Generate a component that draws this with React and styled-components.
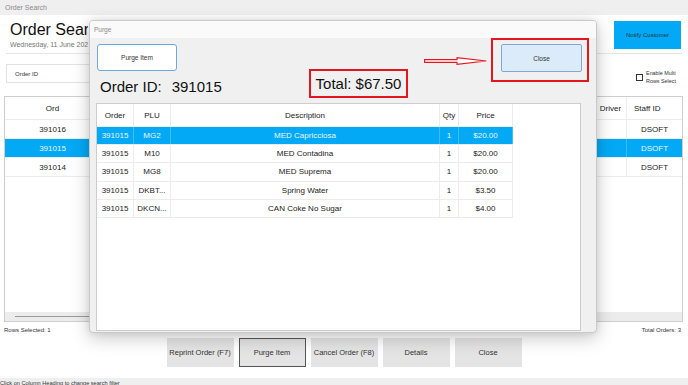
import React from "react";
import styled, { createGlobalStyle } from "styled-components";

const GlobalStyle = createGlobalStyle`
  html, body {
    margin: 0;
    padding: 0;
    background: #ffffff;
    overflow: hidden;
  }
  * {
    box-sizing: border-box;
  }
  body {
    font-family: "Liberation Sans", Arial, sans-serif;
    color: #222;
  }
`;

const BLUE = "#03a9f4";
const RED = "#e3161e";

const Page = styled.div`
  position: relative;
  width: 688px;
  height: 385px;
  display: flex;
  flex-direction: column;
  background: #fff;
`;

const WindowBar = styled.div`
  height: 15px;
  line-height: 15px;
  padding-left: 5px;
  font-size: 7px;
  color: #8a8a8a;
  background: #efefef;
`;

const Header = styled.div`
  display: flex;
  justify-content: space-between;
  align-items: flex-start;
  height: 38px;
  padding: 0 7px 0 10px;
`;

// the dialog hides the rest of the title, so clip it where the dialog starts
const TitleBlock = styled.div`
  display: flex;
  flex-direction: column;
  margin-top: 6px;
  width: 78px;
  overflow: hidden;
  white-space: nowrap;
`;

const Title = styled.div`
  font-size: 16px;
  line-height: 18px;
  color: #111;
`;

const DateLine = styled.div`
  margin-top: 1px;
  font-size: 7px;
  line-height: 9px;
  color: #777;
`;

const NotifyButton = styled.div`
  margin-top: 6px;
  width: 67px;
  height: 28px;
  display: flex;
  align-items: center;
  justify-content: center;
  background: ${BLUE};
  font-size: 6px;
  color: #26333b;
`;

const Separator = styled.div`
  height: 1px;
  margin: 0 6px;
  background: #e6e6e6;
`;

const FilterRow = styled.div`
  display: flex;
  align-items: center;
  height: 19px;
  margin-top: 10px;
  padding: 0 12px 0 6px;
`;

const FilterBox = styled.div`
  width: 180px;
  height: 19px;
  display: flex;
  align-items: center;
  padding-left: 8px;
  border: 1px solid #e3e3e3;
  font-size: 6px;
  color: #333;
`;

const CheckGroup = styled.label`
  margin-left: auto;
  margin-top: 7px;
  display: flex;
  align-items: center;
  gap: 3px;
`;

const CheckBox = styled.span`
  width: 7px;
  height: 7px;
  border: 1px solid #333;
  background: #fff;
`;

const CheckText = styled.span`
  font-size: 5.4px;
  line-height: 8px;
  color: #333;
`;

const Grid = styled.div`
  margin: 13px 5px 0 4px;
  height: 226px;
  border: 1px solid #cfcfcf;
  display: flex;
  flex-direction: column;
`;

const GridRow = styled.div`
  display: grid;
  grid-template-columns: 96px 1fr 32px 55px;
  height: ${({ $head }) => ($head ? "23px" : "19px")};
  background: ${({ $selected }) => ($selected ? BLUE : "#fff")};
  border-bottom: 1px solid #ececec;
`;

const GridCell = styled.div`
  display: flex;
  align-items: center;
  justify-content: ${({ $left }) => ($left ? "flex-start" : "center")};
  padding-left: ${({ $left }) => ($left ? "7px" : "0")};
  font-size: 8px;
  color: ${({ $selected }) => ($selected ? "#e9f7fe" : "#222")};
  border-right: 1px solid ${({ $selected }) => ($selected ? "#36bdf7" : "#ececec")};
  &:last-child {
    border-right: none;
  }
`;

const GridFill = styled.div`
  flex: 1;
`;

const ScrollBand = styled.div`
  height: 9px;
  background: #ececec;
  display: flex;
  align-items: center;
  padding-left: 10px;
`;

const ScrollThumb = styled.div`
  width: 90px;
  height: 1px;
  background: #9a9a9a;
`;

const InfoRow = styled.div`
  display: flex;
  justify-content: space-between;
  margin-top: 4px;
  height: 9px;
  padding: 0 7px 0 4px;
  font-size: 6px;
  line-height: 9px;
  color: #333;
`;

const ButtonRow = styled.div`
  display: flex;
  justify-content: center;
  gap: 5px;
  margin-top: 3px;
`;

const ActionButton = styled.div`
  width: 67px;
  height: 29px;
  display: flex;
  align-items: center;
  justify-content: center;
  background: #e4e4e4;
  border: 1px solid ${({ $active }) => ($active ? "#555" : "transparent")};
  font-size: 7.5px;
  color: #333;
`;

const StatusBar = styled.div`
  margin-top: auto;
  height: 7px;
  overflow: hidden;
  background: #efefef;
  font-size: 5.6px;
  line-height: 11px;
  color: #333;
`;

/* dialog window over the search page */
const Dialog = styled.div`
  position: absolute;
  left: 89px;
  top: 20px;
  width: 508px;
  height: 313px;
  display: flex;
  flex-direction: column;
  border: 1px solid #c9c9c9;
  border-radius: 4px;
  overflow: hidden;
  background: #f0f0f0;
  box-shadow: 0 5px 18px rgba(0, 0, 0, 0.22), 0 0 6px rgba(0, 0, 0, 0.08);
`;

const DialogBar = styled.div`
  height: 17px;
  line-height: 17px;
  padding-left: 4px;
  font-size: 6.5px;
  color: #8a8a8a;
  background: #fafafa;
`;

const DialogBody = styled.div`
  flex: 1;
  display: flex;
  flex-direction: column;
  padding: 0 7px 1px 6px;
`;

const TopRow = styled.div`
  display: flex;
  align-items: flex-start;
  height: 65px;
`;

const LeftCol = styled.div`
  width: 213px;
  display: flex;
  flex-direction: column;
`;

const PurgeButton = styled.div`
  margin: 6px 0 0 1px;
  width: 80px;
  height: 27px;
  display: flex;
  align-items: center;
  justify-content: center;
  background: #fff;
  border: 1px solid #6fa8dc;
  border-radius: 3px;
  font-size: 6.5px;
  color: #333;
`;

const OrderHeading = styled.div`
  margin: 7px 0 0 4px;
  font-size: 15px;
  line-height: 18px;
  color: #111;
  white-space: nowrap;
  span {
    margin-left: 10px;
  }
`;

const TotalBox = styled.div`
  margin-top: 31px;
  width: 99px;
  height: 29px;
  border: 2px solid ${RED};
  padding-top: 4px;
  text-align: center;
  font-size: 15px;
  line-height: 18px;
  color: #111;
`;

const ArrowWrap = styled.div`
  margin: 19px 0 0 16px;
  width: 63px;
  height: 8px;
  display: flex;
`;

const CloseFrame = styled.div`
  margin-left: 4px;
  width: 98px;
  height: 44px;
  border: 2px solid ${RED};
  padding: 4px 0 0 8px;
`;

const CloseButton = styled.div`
  width: 81px;
  height: 28px;
  display: flex;
  align-items: center;
  justify-content: center;
  background: #dcebf9;
  border: 1px solid #7fa9d6;
  border-radius: 2px;
  font-size: 6.5px;
  color: #333;
`;

const ItemsPanel = styled.div`
  width: 485px;
  height: 228px;
  background: #fff;
  border: 1px solid #cdcdcd;
`;

const ItemRow = styled.div`
  display: grid;
  grid-template-columns: 37px 37px 269px 19px 54px;
  width: 416px;
  height: ${({ $head }) => ($head ? "23px" : "18.2px")};
  background: ${({ $selected }) => ($selected ? BLUE : "#fff")};
  border-bottom: 1px solid #ececec;
`;

const ItemCell = styled.div`
  display: flex;
  align-items: center;
  justify-content: center;
  overflow: hidden;
  white-space: nowrap;
  font-size: 8px;
  color: ${({ $selected }) => ($selected ? "#e9f7fe" : "#222")};
  border-right: 1px solid ${({ $selected }) => ($selected ? "#3bbff7" : "#ececec")};
`;

const Arrow = () => (
  <svg width="63" height="8" viewBox="0 0 63 8">
    <polygon
      points="0.6,2.6 33,2.6 33,0.6 62.2,4 33,7.4 33,5.4 0.6,5.4"
      fill="#fff"
      stroke={RED}
      strokeWidth="1.1"
    />
  </svg>
);

const orders = [
  { id: "391016", staff: "DSOFT" },
  { id: "391015", staff: "DSOFT", selected: true },
  { id: "391014", staff: "DSOFT" },
];

const items = [
  { plu: "MG2", desc: "MED Capricciosa", price: "$20.00", selected: true },
  { plu: "M10", desc: "MED Contadina", price: "$20.00" },
  { plu: "MG8", desc: "MED Suprema", price: "$20.00" },
  { plu: "DKBT...", desc: "Spring Water", price: "$3.50" },
  { plu: "DKCN...", desc: "CAN Coke No Sugar", price: "$4.00" },
];

const actions = ["Reprint Order (F7)", "Purge Item", "Cancel Order (F8)", "Details", "Close"];

const App = () => {
  return (
    <Page>
      <GlobalStyle />
      <WindowBar>Order Search</WindowBar>
      <Header>
        <TitleBlock>
          <Title>Order Search</Title>
          <DateLine>Wednesday, 11 June 2025</DateLine>
        </TitleBlock>
        <NotifyButton>Notify Customer</NotifyButton>
      </Header>
      <Separator />

      <FilterRow>
        <FilterBox>Order ID</FilterBox>
        <CheckGroup>
          <CheckBox />
          <CheckText>
            Enable Multi
            <br />
            Rows Select
          </CheckText>
        </CheckGroup>
      </FilterRow>

      <Grid>
        <GridRow $head>
          <GridCell>Ord</GridCell>
          <GridCell />
          <GridCell>Driver</GridCell>
          <GridCell $left>Staff ID</GridCell>
        </GridRow>
        {orders.map((o) => (
          <GridRow key={o.id} $selected={o.selected}>
            <GridCell $selected={o.selected}>{o.id}</GridCell>
            <GridCell $selected={o.selected} />
            <GridCell $selected={o.selected} />
            <GridCell $selected={o.selected}>{o.staff}</GridCell>
          </GridRow>
        ))}
        <GridFill />
        <ScrollBand>
          <ScrollThumb />
        </ScrollBand>
      </Grid>

      <InfoRow>
        <span>Rows Selected: 1</span>
        <span>Total Orders: 3</span>
      </InfoRow>

      <ButtonRow>
        {actions.map((a) => (
          <ActionButton key={a} $active={a === "Purge Item"}>
            {a}
          </ActionButton>
        ))}
      </ButtonRow>

      <StatusBar>Click on Column Heading to change search filter</StatusBar>

      <Dialog>
        <DialogBar>Purge</DialogBar>
        <DialogBody>
          <TopRow>
            <LeftCol>
              <PurgeButton>Purge Item</PurgeButton>
              <OrderHeading>
                Order ID:<span>391015</span>
              </OrderHeading>
            </LeftCol>
            <TotalBox>Total: $67.50</TotalBox>
            <ArrowWrap>
              <Arrow />
            </ArrowWrap>
            <CloseFrame>
              <CloseButton>Close</CloseButton>
            </CloseFrame>
          </TopRow>

          <ItemsPanel>
            <ItemRow $head>
              <ItemCell>Order</ItemCell>
              <ItemCell>PLU</ItemCell>
              <ItemCell>Description</ItemCell>
              <ItemCell>Qty</ItemCell>
              <ItemCell>Price</ItemCell>
            </ItemRow>
            {items.map((it) => (
              <ItemRow key={it.desc} $selected={it.selected}>
                <ItemCell $selected={it.selected}>391015</ItemCell>
                <ItemCell $selected={it.selected}>{it.plu}</ItemCell>
                <ItemCell $selected={it.selected}>{it.desc}</ItemCell>
                <ItemCell $selected={it.selected}>1</ItemCell>
                <ItemCell $selected={it.selected}>{it.price}</ItemCell>
              </ItemRow>
            ))}
          </ItemsPanel>
        </DialogBody>
      </Dialog>
    </Page>
  );
};

export default App;
